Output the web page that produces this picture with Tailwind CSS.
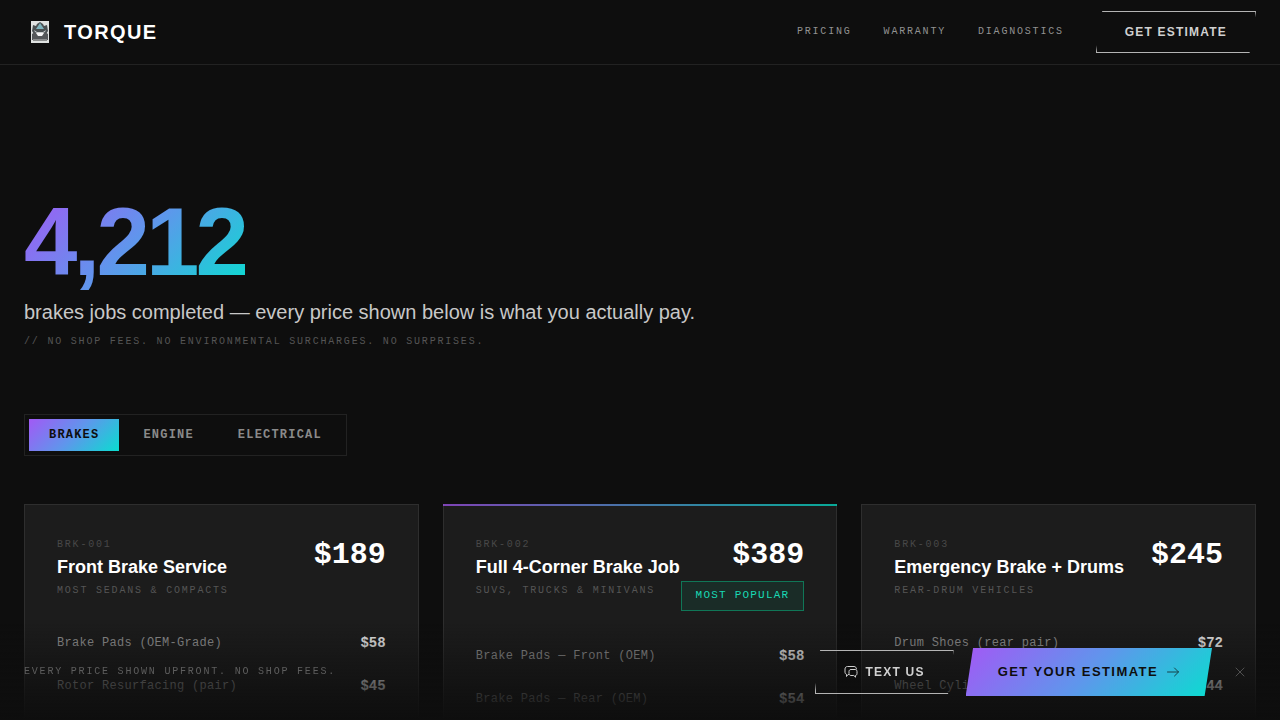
<!DOCTYPE html>
<html lang="en">
<head>
    <meta charset="UTF-8">
    <meta name="viewport" content="width=device-width, initial-scale=1.0">
    <title>TORQUE</title>
    <script src="https://cdn.jsdelivr.net/npm/@tailwindcss/browser@4"></script>
</head>
<body class="bg-[#0e0e0e] text-white font-['Liberation_Sans',Arial,sans-serif] min-h-screen">
    <!-- Header -->
    <header class="h-[65px] border-b border-[#222222] px-6 flex items-center justify-between">
        <a href="#" class="flex items-center gap-2">
            <svg class="w-8 h-8" viewBox="0 0 32 32" aria-hidden="true">
                <rect x="7" y="5" width="18" height="22" fill="#dfe2e1"/>
                <path d="M9 9l3 1 1-2 3-2 3 2 1 2 3-1 1 6-2 3H10l-2-3z" fill="#4a5052"/>
                <path d="M16 7l4 6h-8z" fill="#7fb4bd"/>
                <path d="M10 14l3 2h6l3-2-2 4h-8z" fill="#c9cdcd"/>
                <path d="M8 18l3-2 2 1h6l2-1 3 2v6H8z" fill="#55585a"/>
                <path d="M12 17h8l-2 3h-4z" fill="#f4f4f4"/>
                <path d="M9 23h14v2H9z" fill="#8b8d8d"/>
            </svg>
            <span class="text-xl leading-7 font-bold tracking-[0.07em]">TORQUE</span>
        </a>
        <nav class="flex items-center gap-8 font-['Liberation_Mono',monospace] text-[10px] leading-4 tracking-[0.18em] text-[#929292]">
            <a href="#pricing">PRICING</a>
            <a href="#warranty">WARRANTY</a>
            <a href="#diagnostics">DIAGNOSTICS</a>
            <button type="button" class="h-[42px] px-7 border border-[#b4b4b4] [clip-path:polygon(4%_0,100%_0,96%_100%,0_100%)] font-['Liberation_Sans',Arial,sans-serif] text-xs font-bold tracking-[0.1em] text-[#d0d0d0]">GET ESTIMATE</button>
        </nav>
    </header>

    <main class="px-6 pt-[129px] pb-24">
        <!-- Hero -->
        <section>
            <h1 class="w-fit text-8xl leading-none font-bold tracking-[-0.04em] bg-[linear-gradient(135deg,#a259f5,#5f96ec,#0addd0)] bg-clip-text text-transparent">4,212</h1>
            <p class="mt-2 text-xl leading-7 text-[#c8c8c8]">brakes jobs completed — every price shown below is what you actually pay.</p>
            <p class="mt-2 font-['Liberation_Mono',monospace] text-[10px] leading-4 tracking-[0.18em] text-[#555555]">// NO SHOP FEES. NO ENVIRONMENTAL SURCHARGES. NO SURPRISES.</p>
        </section>

        <!-- Category tabs -->
        <div class="mt-16 w-fit flex gap-1 p-1 border border-[#222222] font-['Liberation_Mono',monospace] text-xs font-bold tracking-[0.1em] text-[#8a8a8a]">
            <button type="button" class="h-8 px-5 bg-[linear-gradient(135deg,#a259f5,#5f96ec,#0addd0)] text-[#0e0e0e]">BRAKES</button>
            <button type="button" class="h-8 px-5">ENGINE</button>
            <button type="button" class="h-8 px-5">ELECTRICAL</button>
        </div>

        <!-- Price cards -->
        <section id="pricing" class="mt-12 grid grid-cols-3 gap-6">
            <article class="bg-[#1c1c1c] border border-[#2e2e2e] p-8">
                <div class="flex justify-between mb-6">
                    <div>
                        <p class="font-['Liberation_Mono',monospace] text-[10px] leading-[15px] tracking-[0.18em] text-[#484848]">BRK-001</p>
                        <h2 class="mt-[3px] mb-1 text-lg leading-6 font-bold whitespace-nowrap">Front Brake Service</h2>
                        <p class="font-['Liberation_Mono',monospace] text-[10px] leading-[15px] tracking-[0.18em] text-[#555555] whitespace-nowrap">MOST SEDANS &amp; COMPACTS</p>
                    </div>
                    <p class="font-['Liberation_Mono',monospace] text-[30px] leading-9 font-bold">$189</p>
                </div>
                <ul class="font-['Liberation_Mono',monospace]">
                    <li class="flex justify-between py-[11px]"><span class="text-xs leading-[21px] tracking-wide text-[#8f8f8f]">Brake Pads (OEM-Grade)</span><span class="text-sm leading-[21px] font-bold text-[#e8e8e8]">$58</span></li>
                    <li class="flex justify-between py-[11px]"><span class="text-xs leading-[21px] tracking-wide text-[#8f8f8f]">Rotor Resurfacing (pair)</span><span class="text-sm leading-[21px] font-bold text-[#e8e8e8]">$45</span></li>
                </ul>
            </article>

            <article class="relative bg-[#1c1c1c] border border-t-0 border-[#2e2e2e] px-8 pt-[33px] pb-8">
                <div class="absolute top-0 -inset-x-px h-0.5 bg-[linear-gradient(90deg,#a855f7,#00e5cc)] opacity-70"></div>
                <div class="flex justify-between mb-6">
                    <div class="w-0 whitespace-nowrap">
                        <p class="font-['Liberation_Mono',monospace] text-[10px] leading-[15px] tracking-[0.18em] text-[#484848]">BRK-002</p>
                        <h2 class="mt-[3px] mb-1 text-lg leading-6 font-bold">Full 4-Corner Brake Job</h2>
                        <p class="font-['Liberation_Mono',monospace] text-[10px] leading-[15px] tracking-[0.18em] text-[#555555]">SUVS, TRUCKS &amp; MINIVANS</p>
                    </div>
                    <div class="flex flex-col items-end gap-2">
                        <p class="font-['Liberation_Mono',monospace] text-[30px] leading-9 font-bold">$389</p>
                        <span class="px-3.5 pt-1.5 pb-2 border border-[#00e5a0]/40 bg-[#00e5a0]/8 font-['Liberation_Mono',monospace] text-[11px] leading-[14px] tracking-[0.11em] text-[#18d8b4]">MOST POPULAR</span>
                    </div>
                </div>
                <ul class="font-['Liberation_Mono',monospace]">
                    <li class="flex justify-between py-[11px]"><span class="text-xs leading-[21px] tracking-wide text-[#8f8f8f]">Brake Pads — Front (OEM)</span><span class="text-sm leading-[21px] font-bold text-[#e8e8e8]">$58</span></li>
                    <li class="flex justify-between py-[11px]"><span class="text-xs leading-[21px] tracking-wide text-[#8f8f8f]">Brake Pads — Rear (OEM)</span><span class="text-sm leading-[21px] font-bold text-[#e8e8e8]">$54</span></li>
                </ul>
            </article>

            <article class="bg-[#1c1c1c] border border-[#2e2e2e] p-8">
                <div class="flex justify-between mb-6">
                    <div>
                        <p class="font-['Liberation_Mono',monospace] text-[10px] leading-[15px] tracking-[0.18em] text-[#484848]">BRK-003</p>
                        <h2 class="mt-[3px] mb-1 text-lg leading-6 font-bold whitespace-nowrap">Emergency Brake + Drums</h2>
                        <p class="font-['Liberation_Mono',monospace] text-[10px] leading-[15px] tracking-[0.18em] text-[#555555] whitespace-nowrap">REAR-DRUM VEHICLES</p>
                    </div>
                    <p class="font-['Liberation_Mono',monospace] text-[30px] leading-9 font-bold">$245</p>
                </div>
                <ul class="font-['Liberation_Mono',monospace]">
                    <li class="flex justify-between py-[11px]"><span class="text-xs leading-[21px] tracking-wide text-[#8f8f8f]">Drum Shoes (rear pair)</span><span class="text-sm leading-[21px] font-bold text-[#e8e8e8]">$72</span></li>
                    <li class="flex justify-between py-[11px]"><span class="text-xs leading-[21px] tracking-wide text-[#8f8f8f]">Wheel Cylinders</span><span class="text-sm leading-[21px] font-bold text-[#e8e8e8]">$44</span></li>
                </ul>
            </article>
        </section>
    </main>

    <!-- Sticky call to action -->
    <div class="fixed inset-x-0 bottom-0 p-6 flex items-center justify-between bg-linear-to-t from-[#0e0e0e] to-[#0e0e0e]/0">
        <p class="font-['Liberation_Mono',monospace] text-[10px] leading-4 tracking-[0.18em] text-[#5e5e5e]">EVERY PRICE SHOWN UPFRONT. NO SHOP FEES.</p>
        <div class="flex items-center gap-3">
            <button type="button" class="h-11 px-7 flex items-center gap-2 border border-[#b4b4b4] [clip-path:polygon(4%_0,100%_0,96%_100%,0_100%)] text-xs font-bold tracking-[0.1em] text-[#d0d0d0]">
                <svg class="w-3.5 h-3.5" viewBox="0 0 14 14" fill="none" stroke="currentColor" stroke-width="1" stroke-linejoin="round" stroke-linecap="round" aria-hidden="true">
                    <path d="M4.500 9.500H4L2.500 11.500V9.300C1.400 9 1 8 1 7V4c0-1.400 1-2.500 2.500-2.500h6.500C11.400 1.500 12.500 2.500 12.500 4"/>
                    <path d="M7 4.500h4c1.200 0 2 .8 2 2v2c0 1.200-.6 1.800-1.500 2v1.700L9.800 10.500H7c-1.200 0-2-.8-2-2v-2c0-1.200.8-2 2-2z"/>
                </svg>
                TEXT US
            </button>
            <button type="button" class="h-12 px-8 flex items-center gap-2 bg-[linear-gradient(135deg,#a259f5,#5f96ec,#0addd0)] [clip-path:polygon(3%_0,100%_0,97%_100%,0_100%)] text-[13px] font-bold tracking-[0.11em] text-[#0e0e0e]">
                GET YOUR ESTIMATE
                <svg class="w-3.5 h-3.5 opacity-70" viewBox="0 0 14 14" fill="none" stroke="currentColor" stroke-width="1" stroke-linejoin="round" stroke-linecap="round" aria-hidden="true">
                    <path d="M1.500 7h11M8.500 3l4 4-4 4"/>
                </svg>
            </button>
            <button type="button" aria-label="Dismiss" class="w-8 h-8 flex items-center justify-center text-[#505050]">
                <svg class="w-3.5 h-3.5" viewBox="0 0 14 14" fill="none" stroke="currentColor" stroke-width="1" stroke-linecap="round" aria-hidden="true">
                    <path d="M3 3l8 8M11 3l-8 8"/>
                </svg>
            </button>
        </div>
    </div>
</body>
</html>
